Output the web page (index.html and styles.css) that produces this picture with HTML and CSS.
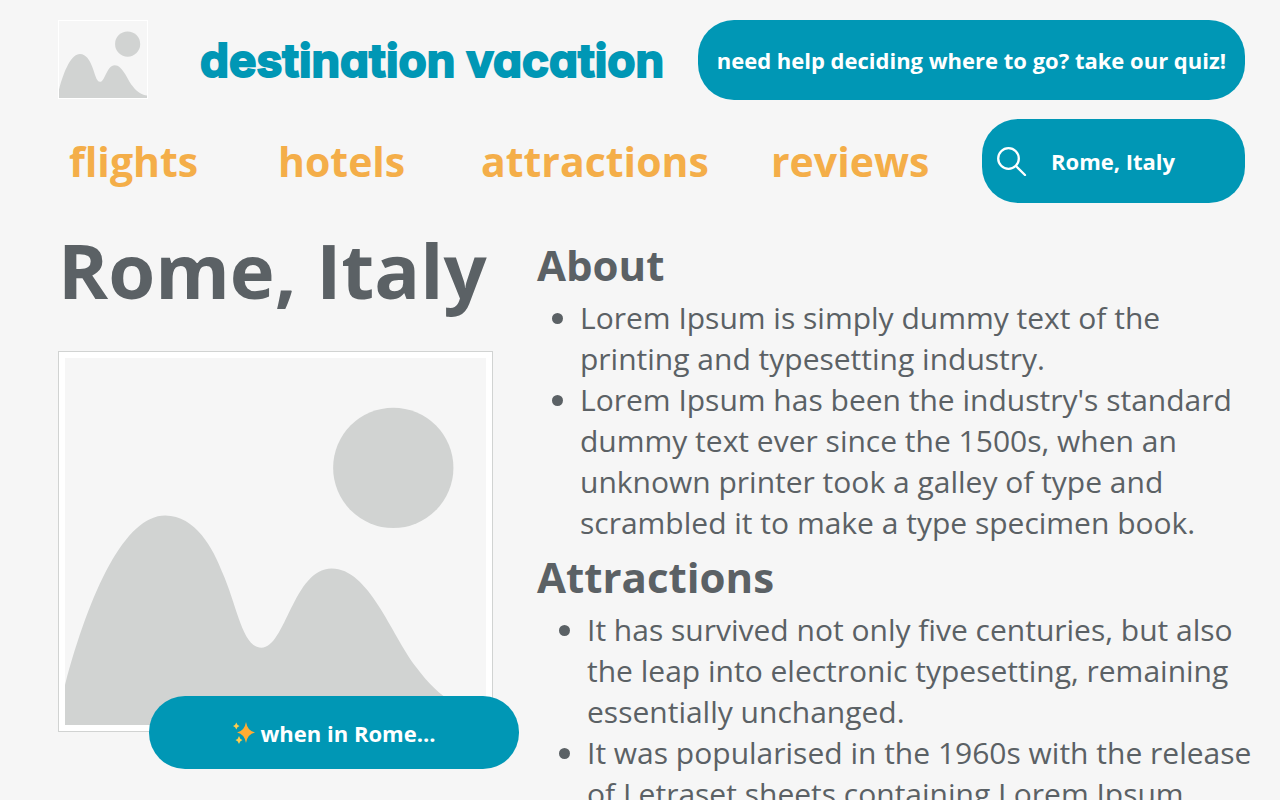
FILE: index.html
```html
<!DOCTYPE html>
<html lang="en">
<head>
<meta charset="utf-8">
<meta name="viewport" content="width=device-width, initial-scale=1">
<title>destination vacation</title>
<link rel="stylesheet" href="styles.css">
</head>
<body>
<svg class="defs" aria-hidden="true">
  <symbol id="landscape" viewBox="0 0 420 366" preserveAspectRatio="none">
    <circle cx="327.5" cy="109.5" r="60"/>
    <path d="M0 326C25 232 60 157 100 157C130 157 148 190 157 214C172 248 177 289 196 289C220 289 228 210 266 210C303 210 325 275 350 308C375 342 398 352 420 354V366H0Z"/>
  </symbol>
</svg>
<header class="header">
  <div class="top">
    <svg class="logo" role="img" aria-label="Logo"><use href="#landscape"/></svg>
    <a class="brand" href="#">destination vacation</a>
    <button class="pill quiz" type="button">need help deciding where to go? take our quiz!</button>
  </div>
  <nav class="nav">
    <a href="#">flights</a>
    <a href="#">hotels</a>
    <a href="#">attractions</a>
    <a href="#">reviews</a>
    <label class="pill search">
      <svg class="search-icon" viewBox="0 0 30 30" role="img" aria-label="Search"><circle cx="11.500" cy="12.500" r="10.300"/><path d="M19 20L28 29"/></svg>
      <input type="text" value="Rome, Italy">
    </label>
  </nav>
</header>
<main class="main">
  <section class="place">
    <h1>Rome, Italy</h1>
    <div class="photo">
      <svg class="scene" role="img" aria-label="Photo of Rome"><use href="#landscape"/></svg>
      <button class="pill tips" type="button">
        <svg class="sparkles" viewBox="0 0 22 22" aria-hidden="true"><path class="big" d="M13 0Q14.500 9 22 10.500Q14.500 12 13 21Q11.500 12 4 10.500Q11.500 9 13 0Z"/><path class="small" d="M3.300 .5Q4 3.300 6.600 4Q4 4.700 3.300 7.500Q2.600 4.700 0 4Q2.600 3.300 3.300 .5ZM6 14Q6.700 17 9.500 18Q6.700 19 6 22Q5.300 19 2.500 18Q5.300 17 6 14Z"/></svg>
        when in Rome...
      </button>
    </div>
  </section>
  <article class="info">
    <h2>About</h2>
    <ul>
      <li>Lorem Ipsum is simply dummy text of the printing and typesetting industry.</li>
      <li>Lorem Ipsum has been the industry's standard dummy text ever since the 1500s, when an unknown printer took a galley of type and scrambled it to make a type specimen book.</li>
    </ul>
    <h2>Attractions</h2>
    <ul class="deep">
      <li>It has survived not only five centuries, but also the leap into electronic typesetting, remaining essentially unchanged.</li>
      <li>It was popularised in the 1960s with the release of Letraset sheets containing Lorem Ipsum</li>
    </ul>
  </article>
</main>
</body>
</html>
```
FILE: styles.css
```css
* { box-sizing: border-box; }
body {
  margin: 0;
  background: #f6f6f6;
  color: #5b6165;
  font-family: "Open Sans", "Noto Sans", sans-serif;
}
a { color: inherit; text-decoration: none; }
h1, h2, ul { margin: 0; }
.defs { position: absolute; width: 0; height: 0; }

.header { padding: 20px 35px 0 58px; }
.top { display: flex; align-items: flex-start; }
.logo {
  flex: none;
  width: 90px;
  height: 79px;
  border: 1px solid #fff;
  fill: #d1d3d2;
}
.brand {
  margin-left: 52px;
  color: #0097b5;
  font-family: Inter, sans-serif;
  font-size: 46px;
  font-feature-settings: "cv11";
  font-weight: 700;
  line-height: 80px;
  white-space: nowrap;
  -webkit-text-stroke: 2px #0097b5;
  stroke-linejoin: round;
}
.pill {
  border: 0;
  border-radius: 36px;
  background: #0097b5;
  color: #fff;
  font-family: inherit;
  font-size: 22px;
  font-weight: 700;
}
.quiz { height: 80px; margin-left: auto; padding: 0 19px; }
.nav {
  display: grid;
  grid-template-columns: 209fr 203fr 290fr 211fr 263fr;
  align-items: center;
  margin-top: 19px;
  padding-left: 11px;
  color: #f4ae49;
  font-size: 41px;
  font-weight: 700;
}
.search {
  display: flex;
  align-items: center;
  gap: 24px;
  height: 84px;
  padding: 0 15px;
}
.search-icon {
  flex: none;
  width: 30px;
  height: 30px;
  fill: none;
  stroke: #fff;
  stroke-width: 2.3;
  stroke-linecap: round;
}
.search input {
  width: 100%;
  min-width: 0;
  padding: 0;
  border: 0;
  background: none;
  color: inherit;
  font: inherit;
}

.main {
  display: grid;
  grid-template-columns: minmax(0, 435fr) minmax(0, 723fr);
  gap: 44px;
  padding: 0 20px 0 58px;
}
h1 { font-size: 76px; line-height: 106px; margin-top: 14px; white-space: nowrap; }
.photo {
  position: relative;
  margin-top: 28px;
  padding: 6px;
  border: 1px solid #d1d3d2;
  background: #fff;
}
.scene {
  display: block;
  width: 100%;
  height: 367px;
  background: #f6f6f6;
  fill: #d1d3d2;
}
.tips {
  position: absolute;
  left: 90px;
  right: -27px;
  bottom: -38px;
  display: flex;
  align-items: center;
  justify-content: center;
  gap: 6px;
  height: 73px;
}
.sparkles { width: 22px; height: 22px; }
.sparkles .big { fill: #ffac33; }
.sparkles .small { fill: #ffcc4d; }

.info { padding-top: 30px; }
h2 { font-size: 42px; line-height: 64px; }
ul { padding-left: 43px; font-size: 30px; line-height: 41px; }
ul + h2 { margin-top: 2px; }
.deep { padding-left: 50px; }
```
